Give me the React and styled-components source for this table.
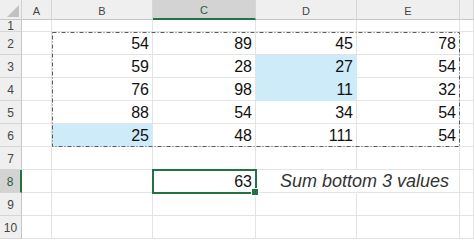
import React from 'react';
import styled, { createGlobalStyle, css } from 'styled-components';

const GlobalStyle = createGlobalStyle`
  html, body { margin: 0; padding: 0; background: #fff; }
  body { font-family: "Liberation Sans", Arial, sans-serif; }
  * { box-sizing: border-box; }
`;

const GREEN = '#217346';

const Sheet = styled.div`
  display: grid;
  grid-template-columns: 22px 30px 101px 103px 101px 103px 1fr;
  grid-template-rows: 20px 12px repeat(9, 23px);
  width: 474px;
  height: 240px;
  overflow: hidden;
`;

const Corner = styled.div`
  grid-row: 1;
  grid-column: 1;
  background: #efefef;
  border-right: 1px solid #d0d0d0;
  border-bottom: 1px solid #c6c6c6;
  display: flex;
  align-items: flex-end;
  justify-content: flex-end;
  padding: 0 2px 2px 0;
`;

const ColHead = styled.div`
  grid-row: 1;
  grid-column: ${p => p.$col};
  background: ${p => (p.$active ? '#d3d3d3' : '#efefef')};
  border-right: 1px solid #d6d6d6;
  border-bottom: ${p => (p.$active ? `2px solid ${GREEN}` : '1px solid #c6c6c6')};
  display: flex;
  align-items: center;
  justify-content: center;
  padding-top: 2px;
  font-size: 11px;
  color: ${p => (p.$active ? '#2c5a40' : '#454545')};
`;

const RowHead = styled.div`
  grid-row: ${p => p.$row};
  grid-column: 1;
  background: ${p => (p.$active ? '#d3d3d3' : '#efefef')};
  border-right: ${p => (p.$active ? `2px solid ${GREEN}` : '1px solid #c6c6c6')};
  border-bottom: 1px solid #d6d6d6;
  display: flex;
  align-items: ${p => (p.$short ? 'flex-start' : 'center')};
  justify-content: center;
  padding-top: ${p => (p.$short ? '0' : '1px')};
  font-size: 12px;
  line-height: 12px;
  overflow: hidden;
  color: ${p => (p.$active ? '#2c5a40' : '#454545')};
`;

const Cell = styled.div`
  grid-row: ${p => p.$row};
  grid-column: ${p => p.$col};
  position: relative;
  display: flex;
  align-items: center;
  justify-content: flex-end;
  padding: 1px 3px 0 0;
  font-size: 16px;
  color: #111;
  white-space: nowrap;
  border-right: 1px solid ${p => (p.$hl ? '#cdebf8' : '#e3e3e3')};
  border-bottom: 1px solid ${p => (p.$hl ? '#cdebf8' : '#e3e3e3')};
  background: ${p => (p.$hl ? '#cdebf8' : 'transparent')};
  ${p =>
    p.$selected &&
    css`
      z-index: 2;
      outline: 2px solid ${GREEN};
      outline-offset: -1px;
      &::after {
        content: '';
        position: absolute;
        right: -4px;
        bottom: -4px;
        width: 6px;
        height: 6px;
        background: ${GREEN};
        border: 1px solid #fff;
      }
    `}
  ${p =>
    p.$overflow &&
    css`
      justify-content: flex-start;
      border-right-color: transparent;
      overflow: visible;
    `}
`;

const Note = styled.span`
  align-self: flex-end;
  margin: 0 0 1px 24px;
  font-family: "Liberation Sans", Arial, sans-serif;
  font-style: italic;
  font-size: 18px;
  line-height: 20px;
  color: #333;
`;

const Marquee = styled.div`
  grid-row: 3 / 8;
  grid-column: 3 / 7;
  z-index: 3;
  pointer-events: none;
`;

const MarqueeSvg = styled.svg`
  display: block;
  width: 100%;
  height: 100%;
  overflow: visible;
`;

const MarqueeRect = styled.rect`
  width: calc(100% - 1px);
  height: calc(100% - 1px);
  fill: none;
  stroke: #5a5a5a;
  stroke-width: 1;
  stroke-dasharray: 4 2 1 2;
`;

const columns = ['A', 'B', 'C', 'D', 'E', ''];
const rows = [1, 2, 3, 4, 5, 6, 7, 8, 9, 10];

const values = {
  2: [54, 89, 45, 78],
  3: [59, 28, 27, 54],
  4: [76, 98, 11, 32],
  5: [88, 54, 34, 54],
  6: [25, 48, 111, 54],
};

const highlighted = new Set(['D3', 'D4', 'B6']);

export default function App() {
  const cells = [];
  rows.forEach(r => {
    const gridRow = r + 1;
    columns.forEach((letter, i) => {
      const gridCol = i + 2;
      const key = `${letter}${r}`;
      let content = null;
      const extra = {};
      if (values[r] && i >= 1 && i <= 4) content = values[r][i - 1];
      if (key === 'C8') {
        content = 63;
        extra.$selected = true;
      }
      if (key === 'D8') {
        content = <Note>Sum bottom 3 values</Note>;
        extra.$overflow = true;
      }
      cells.push(
        <Cell
          key={letter ? key : `x${r}`}
          $row={gridRow}
          $col={gridCol}
          $hl={highlighted.has(key)}
          {...extra}
        >
          {content}
        </Cell>
      );
    });
  });

  return (
    <>
      <GlobalStyle />
      <Sheet>
        <Corner>
          <svg width="12" height="12" viewBox="0 0 12 12">
            <polygon points="12,0 12,12 0,12" fill="#c2c2c2" />
          </svg>
        </Corner>
        {columns.map((c, i) => (
          <ColHead key={`h${i}`} $col={i + 2} $active={c === 'C'}>
            {c}
          </ColHead>
        ))}
        {rows.map(r => (
          <RowHead key={`r${r}`} $row={r + 1} $active={r === 8} $short={r === 1}>
            {r}
          </RowHead>
        ))}
        {cells}
        <Marquee>
          <MarqueeSvg>
            <MarqueeRect x="0.5" y="0.5" />
          </MarqueeSvg>
        </Marquee>
      </Sheet>
    </>
  );
}
